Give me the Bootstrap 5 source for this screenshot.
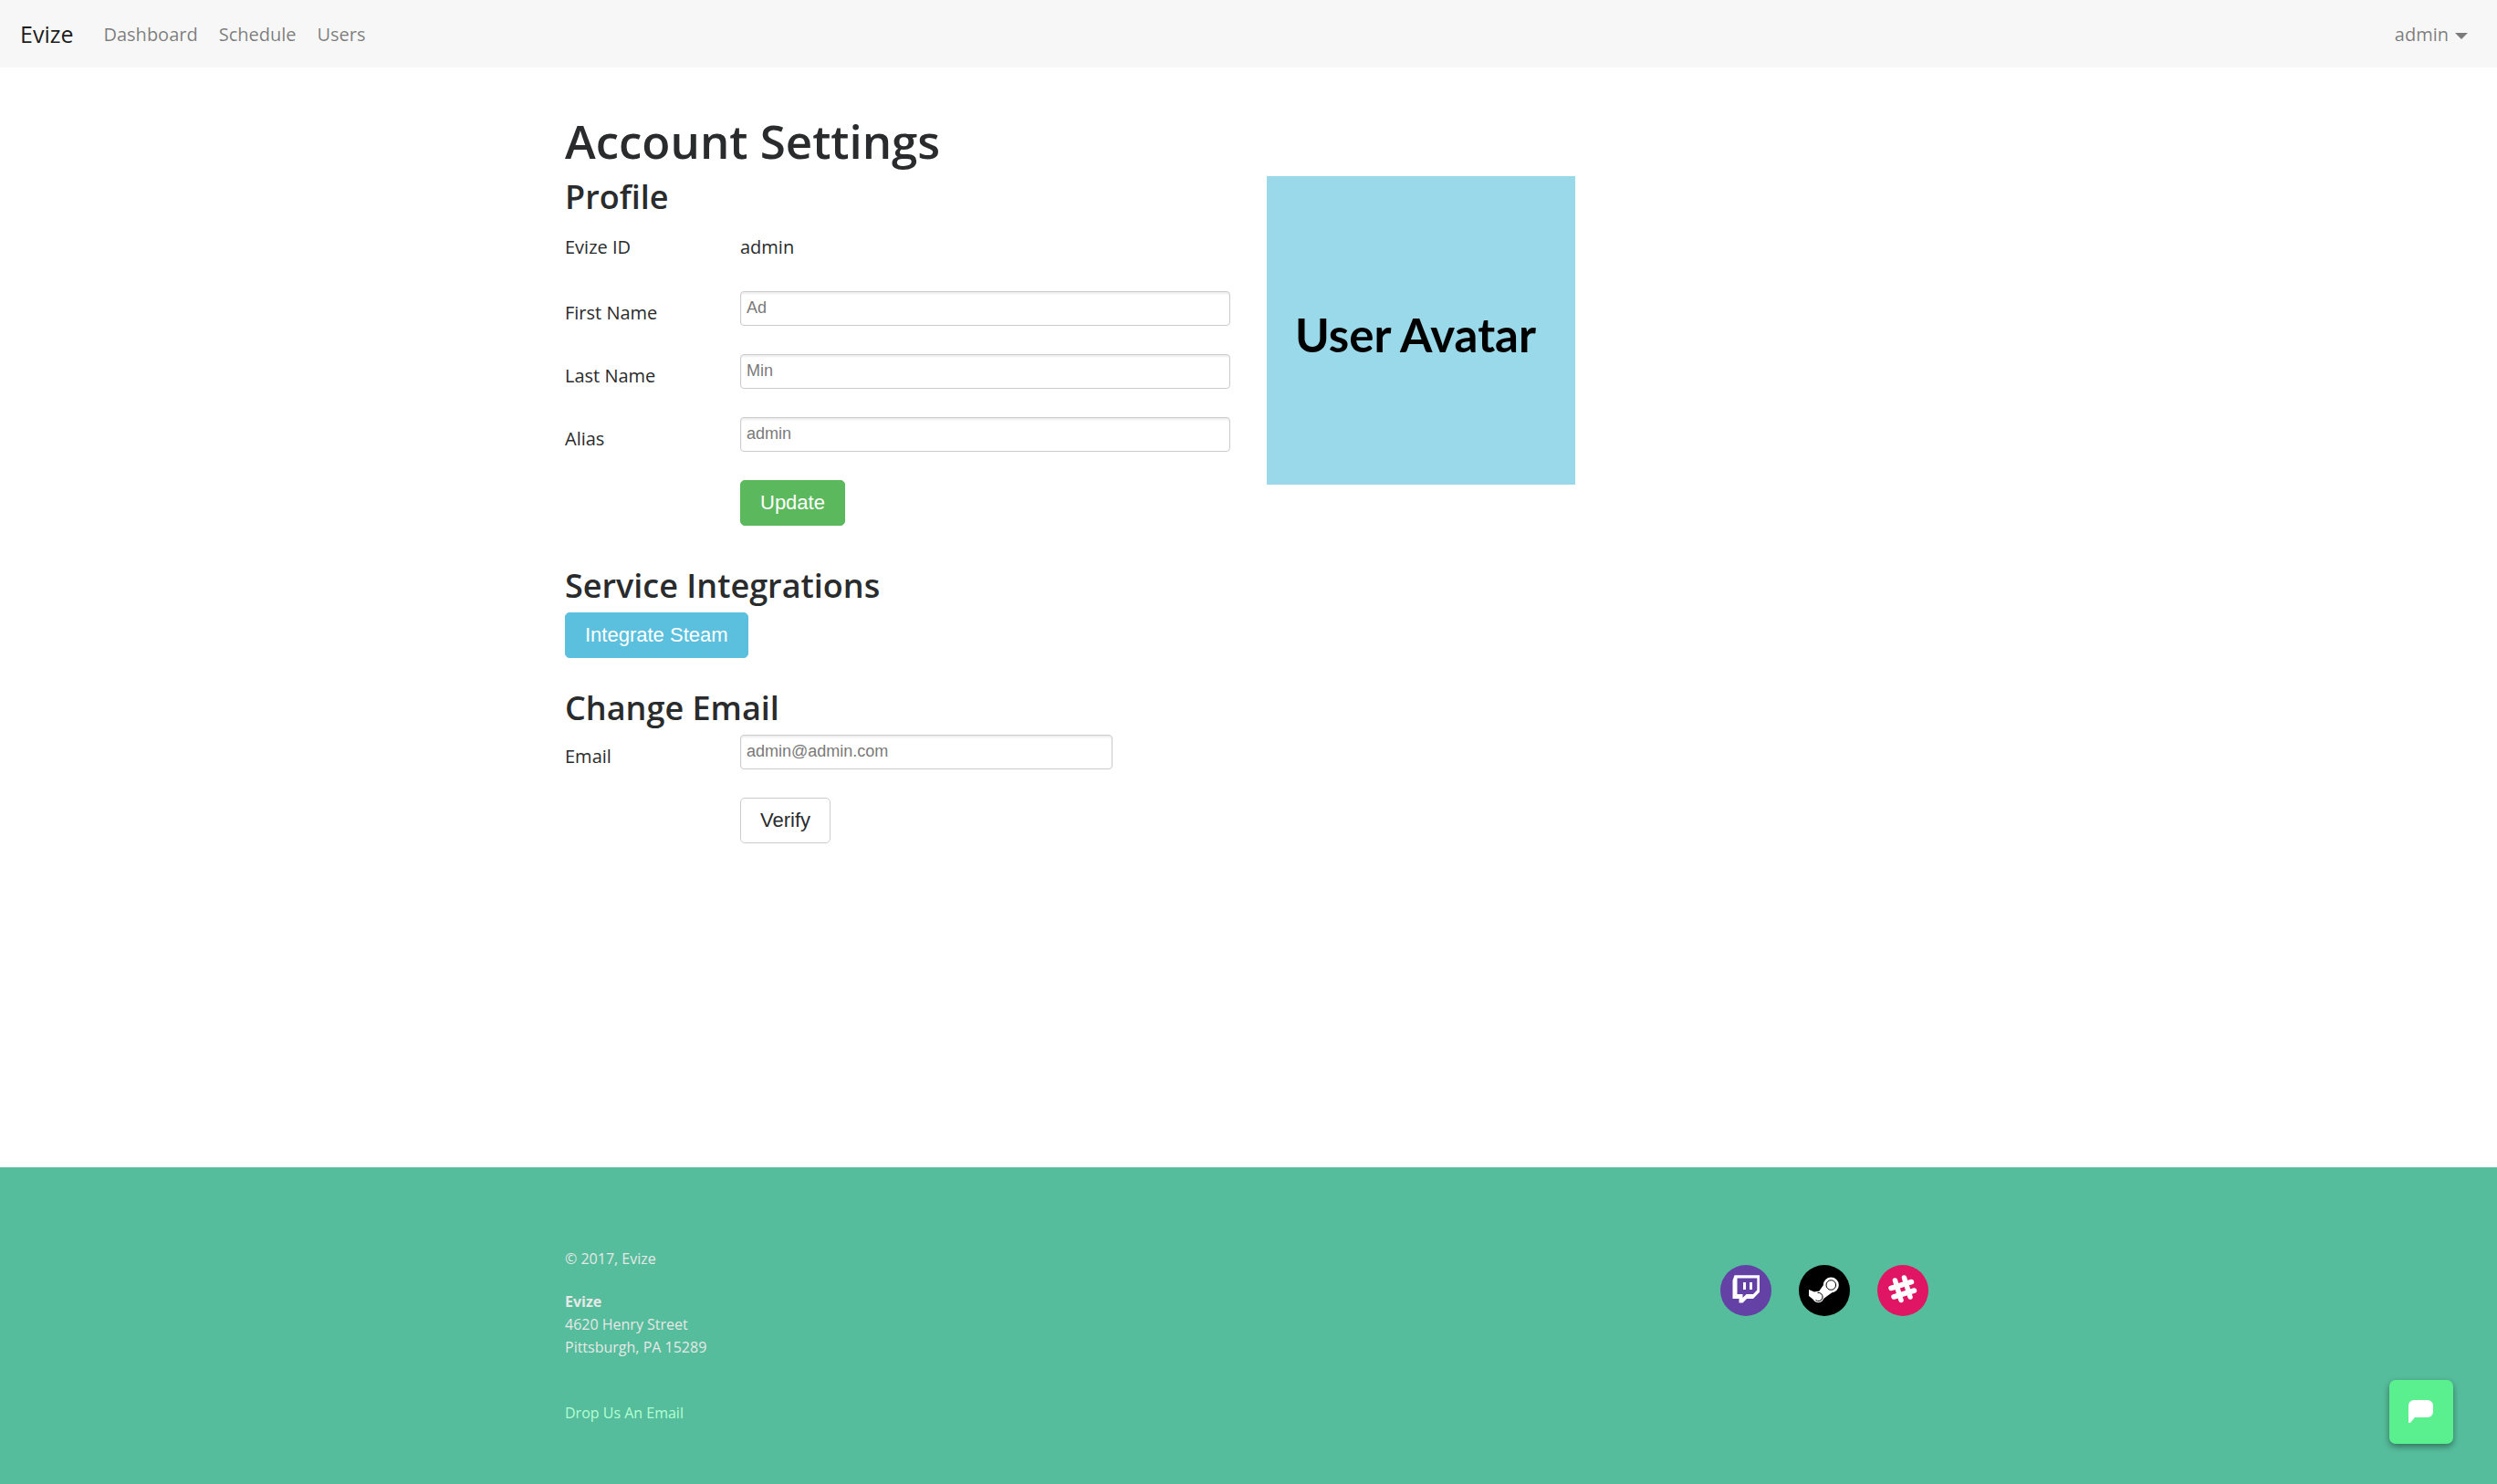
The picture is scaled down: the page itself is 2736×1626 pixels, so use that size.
<!DOCTYPE html>
<html lang="en">
<head>
<meta charset="utf-8">
<meta name="viewport" content="width=device-width, initial-scale=1">
<title>Evize - Account Settings</title>
<link rel="stylesheet" href="https://cdn.jsdelivr.net/npm/bootstrap@5.3.0/dist/css/bootstrap.min.css">
<style>
  body { font-family: "Open Sans", "Noto Sans", sans-serif; font-size: 20px; line-height: 32px; color: #292b2c; background: #fff; }
  .site-nav { background: #f7f7f7; padding: 11px 22px; min-height: 74px; }
  .site-nav .navbar-brand { font-size: 25px; line-height: 40px; color: rgba(0,0,0,.9); padding: 6px 0; margin-right: 33px; }
  .site-nav .navbar-nav { --bs-navbar-nav-link-padding-x: 0; gap: 23px; }
  .site-nav .nav-link { color: rgba(0,0,0,.5); padding-top: 11px; padding-bottom: 9px; }
  .site-nav .account-menu { margin-right: 10px; }
  .site-nav .dropdown-toggle::after { border-top-width: 7px; border-left-width: 7px; border-right-width: 7px; margin-left: 7px; vertical-align: 2px; }
  .page-width { max-width: 1538px; padding-left: 20px; padding-right: 20px; }
  .page-width .row { --bs-gutter-x: 40px; }
  h1, h2 { font-weight: 600; margin: 0; }
  h1 { font-size: 51px; line-height: 60px; padding-top: 50px; }
  h2 { font-size: 36px; line-height: 44px; margin-bottom: 7px; }
  .profile { padding-top: 10px; }
  .section-gap { margin-top: 44px; }
  .email-section { padding-top: 33px; }
  .field-label { width: 192px; }
  .field-row { margin-bottom: 31px; }
  .field-row .field-label { padding-top: 9px; line-height: 29px; }
  .text-field { height: 38px; padding: 0 6px 1px; border: 1px solid #ccc; border-radius: 4px; box-shadow: inset 0 2px 2px rgba(0,0,0,.075); font: 18px "Liberation Sans", Arial, sans-serif; min-height: 0; }
  .text-field::placeholder { color: #7a7a7a; }
  .id-row { padding-top: 10px; margin-bottom: 32px; }
  .btn { font: 22px/26px "Liberation Sans", Arial, sans-serif; padding: 11px 21px; border-radius: 5px; }
  .btn-update, .btn-update:hover { background: #5cb85c; border-color: #5cb85c; color: #fff; }
  .btn-steam, .btn-steam:hover { background: #5bc0de; border-color: #5bc0de; color: #fff; }
  .btn-verify, .btn-verify:hover { background: #fff; border-color: #ccc; color: #292b2c; }
  .email-form { max-width: 600px; }
  .avatar { background: #9ad9ea; color: #000; width: 338px; max-width: 100%; aspect-ratio: 1; margin-top: 9px; padding: 8px 12px 0 0; font: 700 51px "Lato", sans-serif; }
  .site-footer { background: #55bd9b; color: #e8e8e8; font-size: 16px; line-height: 25px; padding: 88px 0 65px; }
  .site-footer p { margin-bottom: 22px; }
  .site-footer address { margin-bottom: 47px; }
  .site-footer .mail-link { color: #b4ffd4; }
  .social { gap: 30px; padding: 19px 4px 0 0; }
  .social svg { width: 56px; height: 56px; display: block; }
  .chat-btn { position: fixed; right: 48px; bottom: 44px; width: 70px; height: 70px; border: 0; border-radius: 7px; background: #5bf08f; box-shadow: 0 3px 7px rgba(0,0,0,.4); }
</style>
</head>
<body class="d-flex flex-column min-vh-100">
<nav class="navbar navbar-expand site-nav">
  <a class="navbar-brand" href="#">Evize</a>
  <ul class="navbar-nav me-auto">
    <li class="nav-item"><a class="nav-link" href="#">Dashboard</a></li>
    <li class="nav-item"><a class="nav-link" href="#">Schedule</a></li>
    <li class="nav-item"><a class="nav-link" href="#">Users</a></li>
  </ul>
  <ul class="navbar-nav account-menu">
    <li class="nav-item dropdown"><a class="nav-link dropdown-toggle" href="#" role="button" data-bs-toggle="dropdown" aria-expanded="false">admin</a></li>
  </ul>
</nav>

<main class="container-fluid page-width flex-grow-1">
  <h1>Account Settings</h1>
  <div class="row">
    <section class="col-6 profile">
      <h2>Profile</h2>
      <div class="d-flex id-row">
        <div class="field-label">Evize ID</div>
        <div>admin</div>
      </div>
      <form>
        <div class="d-flex field-row">
          <label class="field-label" for="first">First Name</label>
          <div class="flex-grow-1"><input class="form-control text-field" id="first" type="text" placeholder="Ad"></div>
        </div>
        <div class="d-flex field-row">
          <label class="field-label" for="last">Last Name</label>
          <div class="flex-grow-1"><input class="form-control text-field" id="last" type="text" placeholder="Min"></div>
        </div>
        <div class="d-flex field-row">
          <label class="field-label" for="alias">Alias</label>
          <div class="flex-grow-1"><input class="form-control text-field" id="alias" type="text" placeholder="admin"></div>
        </div>
        <div class="d-flex">
          <div class="field-label"></div>
          <button class="btn btn-update" type="button">Update</button>
        </div>
      </form>
    </section>
    <div class="col-6">
      <div class="avatar d-flex align-items-center justify-content-center">User Avatar</div>
    </div>
  </div>

  <section class="section-gap">
    <h2>Service Integrations</h2>
    <button class="btn btn-steam" type="button">Integrate Steam</button>
  </section>

  <section class="email-section">
    <h2>Change Email</h2>
    <form class="email-form">
      <div class="d-flex field-row">
        <label class="field-label" for="email">Email</label>
        <div class="flex-grow-1"><input class="form-control text-field" id="email" type="email" placeholder="admin@admin.com"></div>
      </div>
      <div class="d-flex">
        <div class="field-label"></div>
        <button class="btn btn-verify" type="button">Verify</button>
      </div>
    </form>
  </section>
</main>

<footer class="site-footer">
  <div class="container-fluid page-width d-flex justify-content-between align-items-start">
    <div>
      <p>© 2017, Evize</p>
      <address><strong>Evize</strong><br>4620 Henry Street<br>Pittsburgh, PA 15289</address>
      <a class="mail-link text-decoration-none" href="#">Drop Us An Email</a>
    </div>
    <div class="social d-flex">
      <a href="#" aria-label="Twitch">
        <svg viewBox="0 0 56 56"><circle cx="28" cy="28" r="28" fill="#6441a5"/><path fill="#fff" fill-rule="evenodd" d="M15.500 11.300H43v18.500L36 37h-7l-4.500 4.500h-4V37h-7V17zM18.500 14.500v17.500h6v4l4-4H36l4.300-4.500v-13z"/><path fill="#fff" d="M25 19h3v8h-3zM32 19h3v8h-3z"/></svg>
      </a>
      <a href="#" aria-label="Steam">
        <svg viewBox="0 0 56 56"><circle cx="28" cy="28" r="28"/><path fill="#fff" d="M11 27l6 2.500 5-.5 5-7h8l1 8.500-9 6.500-5 4-6-3-5-4z"/><circle cx="35.300" cy="22" r="8.500" fill="#fff"/><circle cx="21.300" cy="35" r="6.200" fill="#fff"/><circle cx="35.300" cy="22" r="5.300" fill="none" stroke="#000" stroke-width="1"/><path fill="none" stroke="#000" stroke-width="1" d="M20.500 30.500a4.600 4.600 0 1 1-2 8"/></svg>
      </a>
      <a href="#" aria-label="Slack">
        <svg viewBox="0 0 56 56"><circle cx="28" cy="28" r="28" fill="#e01563"/><path stroke="#fff" stroke-width="5.500" stroke-linecap="round" d="M19.500 17L26 38.500M29.500 14L36 35M15 25.500L37.500 18.500M18 35L40.500 28"/></svg>
      </a>
    </div>
  </div>
</footer>

<button class="chat-btn d-flex align-items-center justify-content-center p-0" type="button" aria-label="Open chat">
  <svg width="28" height="26" viewBox="0 0 28 26"><path fill="#fff" d="M6 0h15a6 6 0 0 1 6 6v7a6 6 0 0 1-6 6H7l-5 6H0V6a6 6 0 0 1 6-6z"/></svg>
</button>
<script src="https://cdn.jsdelivr.net/npm/bootstrap@5.3.0/dist/js/bootstrap.bundle.min.js"></script>
</body>
</html>
